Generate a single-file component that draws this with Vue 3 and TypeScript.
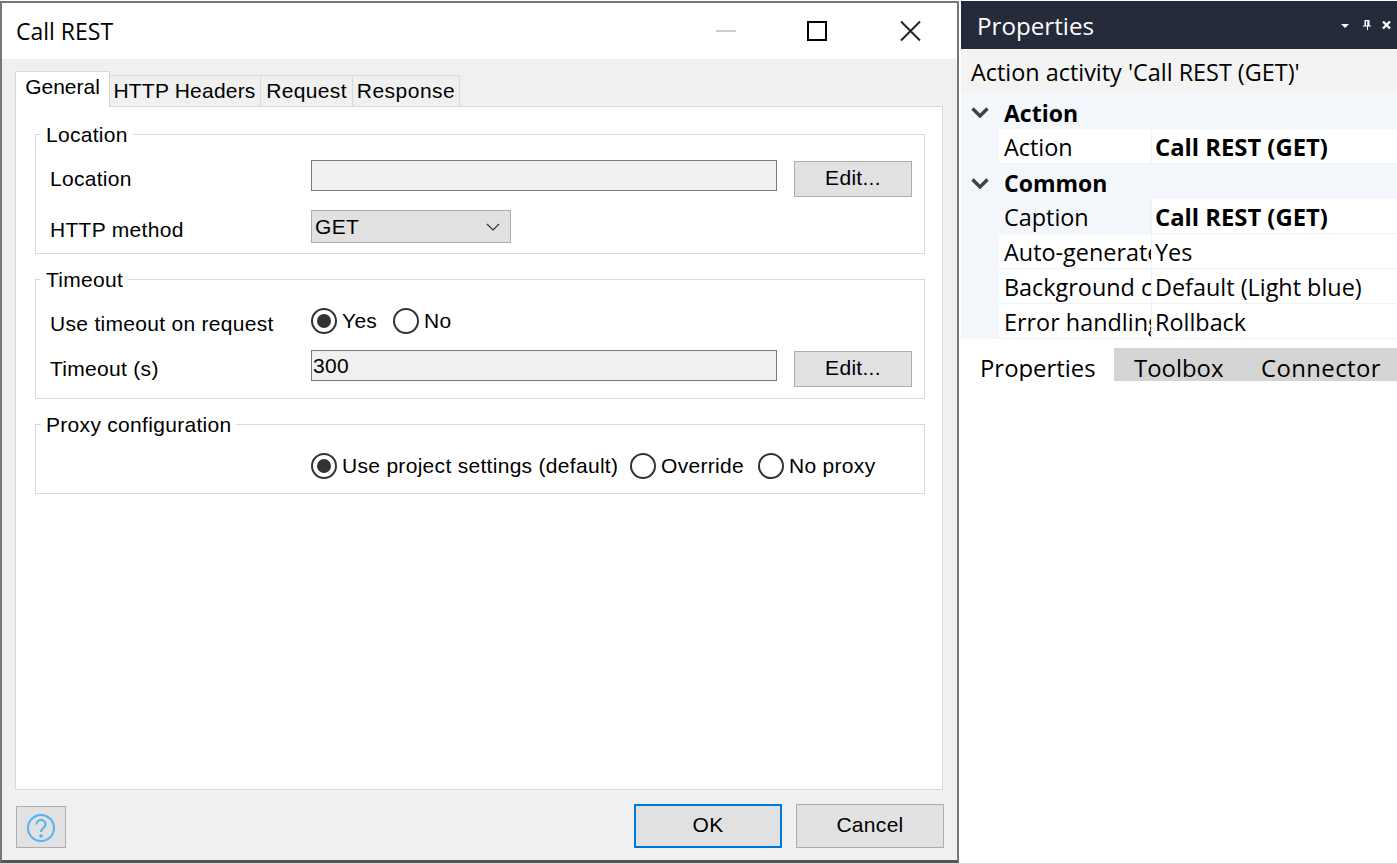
<script setup lang="ts">
const tabs = ['HTTP Headers', 'Request', 'Response']
const tabWidths: Record<string, string> = { 'HTTP Headers': 'w-headers', Request: 'w-request', Response: 'w-response' }
interface Row { name: string; value: string; bold?: boolean; tinted?: boolean }
const groups: { title: string; short?: boolean; rows: Row[] }[] = [
  { title: 'Action', rows: [{ name: 'Action', value: 'Call REST (GET)', bold: true }] },
  {
    title: 'Common',
    short: true,
    rows: [
      { name: 'Caption', value: 'Call REST (GET)', bold: true, tinted: true },
      { name: 'Auto-generate caption', value: 'Yes' },
      { name: 'Background color', value: 'Default (Light blue)' },
      { name: 'Error handling', value: 'Rollback' },
    ],
  },
]
</script>

<template>
  <div class="screen">
    <section class="dialog">
      <header class="titlebar">
        <span class="title">Call REST</span>
        <svg class="winctl" width="240" height="24" viewBox="0 0 240 24">
          <rect x="0" y="11" width="20" height="2" fill="#cccccc" />
          <rect x="92" y="3" width="18" height="18" fill="none" stroke="#000" stroke-width="2" />
          <path d="M185 2.5 L204 21.5 M204 2.5 L185 21.5" stroke="#222" stroke-width="2" fill="none" />
        </svg>
      </header>
      <div class="body">
        <div class="tabstrip">
          <div class="tab active">General</div>
          <div v-for="t in tabs" :key="t" class="tab" :class="tabWidths[t]">{{ t }}</div>
        </div>
        <div class="panel">
          <fieldset class="group g-location">
            <legend>Location</legend>
            <div class="row r-first">
              <span class="label">Location</span>
              <div class="field"></div>
              <button class="btn edit">Edit...</button>
            </div>
            <div class="row r-combo">
              <span class="label low">HTTP method</span>
              <div class="combo">
                <span>GET</span>
                <svg width="14" height="8" viewBox="0 0 14 8"><path d="M1 1 L7 7 L13 1" fill="none" stroke="#333" stroke-width="1.2" /></svg>
              </div>
            </div>
          </fieldset>

          <fieldset class="group g-timeout">
            <legend>Timeout</legend>
            <div class="row r-radio">
              <span class="label low">Use timeout on request</span>
              <span class="radio on"></span><span class="rtext w-yes">Yes</span>
              <span class="radio"></span><span class="rtext">No</span>
            </div>
            <div class="row r-first r-timeout">
              <span class="label">Timeout (s)</span>
              <div class="field"><span>300</span></div>
              <button class="btn edit">Edit...</button>
            </div>
          </fieldset>

          <fieldset class="group g-proxy">
            <legend>Proxy configuration</legend>
            <div class="row r-radio">
              <span class="label"></span>
              <span class="radio on"></span><span class="rtext w-project">Use project settings (default)</span>
              <span class="radio"></span><span class="rtext w-override">Override</span>
              <span class="radio"></span><span class="rtext">No proxy</span>
            </div>
          </fieldset>
        </div>
        <footer class="footer">
          <button class="btn help" aria-label="Help">
            <svg width="30" height="30" viewBox="0 0 30 30">
              <circle cx="15" cy="15" r="13" fill="none" stroke="#4fb3f6" stroke-width="2" />
              <path d="M10.5 11.5 C10.5 5.5 19.5 5.5 19.5 11.5 C19.5 15 15 15 15 19" fill="none" stroke="#4fb3f6" stroke-width="2" />
              <circle cx="15" cy="23" r="1.8" fill="#4fb3f6" />
            </svg>
          </button>
          <button class="btn big primary">OK</button>
          <button class="btn big">Cancel</button>
        </footer>
      </div>
    </section>

    <aside class="props">
      <header class="props-head">
        <span class="props-title">Properties</span>
        <svg class="props-icons" width="52" height="12" viewBox="0 0 52 12">
          <path d="M0 5 H8 L4 9 Z" fill="#fff" />
          <path d="M23.5 1 H28.5 V6.5 H30 V7.5 H27 V11 H26 V7.5 H22 V6.5 H23.5 Z M25 2 V6.5 H26.2 V2 Z" fill="#fff" fill-rule="evenodd" />
          <path d="M42 2.5 L49 9.5 M49 2.5 L42 9.5" stroke="#fff" stroke-width="2.4" />
        </svg>
      </header>
      <div class="props-sub">Action activity 'Call REST (GET)'</div>
      <div class="grid">
        <template v-for="g in groups" :key="g.title">
          <div class="ghead" :class="{ short: g.short }">
            <svg width="18" height="11" viewBox="0 0 18 11"><path d="M1.5 1.5 L9 9 L16.5 1.5" fill="none" stroke="#444" stroke-width="3.4" /></svg>
            <span>{{ g.title }}</span>
          </div>
          <div v-for="r in g.rows" :key="r.name" class="prow">
            <div class="pname" :class="{ tinted: r.tinted }">{{ r.name }}</div>
            <div class="pvalue" :class="{ bold: r.bold }">{{ r.value }}</div>
          </div>
        </template>
      </div>
      <nav class="ptabs">
        <div class="ptab on">Properties</div>
        <div class="ptab toolbox">Toolbox</div>
        <div class="ptab connector">Connector</div>
      </nav>
    </aside>
  </div>
</template>

<style>
html, body { margin: 0; background: #fff; }
</style>

<style scoped>
* { box-sizing: border-box; }
.screen {
  width: 1397px;
  height: 864px;
  display: flex;
  background: #fff;
  overflow: hidden;
  color: #000;
  border-bottom: 1px solid #dddddd;
}
.dialog {
  width: 959px;
  height: 862px;
  margin-top: 1px;
  border: 2px solid #777;
  border-bottom: 3px solid #555;
  display: flex;
  flex-direction: column;
  font-family: "Liberation Sans", Arial, sans-serif;
  font-size: 21px;
  letter-spacing: 0.3px;
}
.titlebar {
  height: 56px;
  flex: none;
  background: #fff;
  display: flex;
  align-items: center;
  padding-left: 14px;
  position: relative;
}
.title {
  font-family: "Open Sans", sans-serif;
  font-size: 23px;
  letter-spacing: 0;
}
.winctl { margin-left: auto; margin-right: 1px; }
.body {
  flex: 1;
  min-height: 0;
  background: #f0f0f0;
  padding: 12px 14px 0 13px;
  display: flex;
  flex-direction: column;
}
.tabstrip { display: flex; align-items: flex-end; height: 36px; flex: none; position: relative; z-index: 1; margin-bottom: -1px; }
.tab {
  height: 32px;
  line-height: 30px;
  border: 1px solid #d9d9d9;
  border-left: 0;
  text-align: center;
  white-space: nowrap;
  background: #f0f0f0;
}
.tab.active {
  width: 95px;
  height: 36px;
  line-height: 29px;
  border: 1px solid #d9d9d9;
  border-bottom: 0;
  background: #fff;
  letter-spacing: 0;
}
.w-headers { width: 151px; letter-spacing: 0.2px; padding-right: 1px; }
.w-request { width: 92px; letter-spacing: 0.35px; }
.w-response { width: 107px; letter-spacing: 0.5px; }
.panel {
  height: 684px;
  flex: none;
  background: #fff;
  border: 1px solid #d9d9d9;
  padding: 15px 17px 0 19px;
  display: flex;
  flex-direction: column;
  gap: 13px;
}
.group {
  margin: 0;
  padding: 0 0 0 14px;
  min-width: 0;
  border: 1px solid #d9d9d9;
  flex: none;
}
.group legend {
  margin-left: -9px;
  padding: 0 5px;
  height: 24px;
  line-height: 25px;
}
.g-location, .g-timeout { height: 132px; }
.g-proxy { height: 82px; }
.row { display: flex; align-items: center; }
.label { width: 261px; flex: none; white-space: nowrap; }
.low { padding-top: 6px; }
.r-first { height: 38px; align-items: flex-start; margin-top: 14px; }
.r-first .label { line-height: 38px; }
.r-timeout { margin-top: 16px; }
.r-combo { height: 33px; margin-top: 12px; }
.r-radio { height: 26px; margin-top: 17px; }
.field {
  width: 466px;
  height: 31px;
  flex: none;
  background: #f0f0f0;
  border: 1px solid #7a7a7a;
  padding-left: 1px;
  line-height: 30px;
}
.btn {
  font: inherit;
  letter-spacing: inherit;
  color: #000;
  background: #e1e1e1;
  border: 1px solid #adadad;
  border-radius: 0;
  padding: 0;
  margin: 0;
}
.edit { width: 118px; height: 36px; margin: 1px 0 0 17px; padding-bottom: 2px; }
.combo {
  width: 200px;
  height: 33px;
  background: #e1e1e1;
  border: 1px solid #adadad;
  display: flex;
  align-items: center;
  justify-content: space-between;
  padding: 0 10px 0 3px;
}
.combo span { padding-top: 1px; }
.radio {
  width: 26px;
  height: 26px;
  flex: none;
  border: 2px solid #333;
  border-radius: 50%;
  background: #fff;
  position: relative;
}
.radio.on::after {
  content: "";
  position: absolute;
  inset: 4px;
  border-radius: 50%;
  background: #333;
}
.rtext { margin-left: 5px; white-space: nowrap; }
.w-yes { width: 51px; }
.w-project { width: 288px; }
.w-override { width: 97px; }
.footer {
  flex: 1;
  display: flex;
  align-items: flex-start;
  padding-top: 14px;
  margin-right: -1px;
}
.help {
  width: 50px;
  height: 42px;
  margin: 2px auto 0 1px;
  padding-top: 2px;
  display: flex;
  align-items: center;
  justify-content: center;
}
.big { width: 148px; height: 44px; padding-bottom: 2px; }
.big + .big { margin-left: 14px; }
.primary { border: 2px solid #0078d7; }

.props {
  width: 436px;
  margin-left: 2px;
  margin-top: 1px;
  display: flex;
  flex-direction: column;
  font-family: "Open Sans", sans-serif;
  font-size: 23.4px;
}
.props-head {
  height: 48px;
  flex: none;
  background: #252b3b;
  color: #fff;
  display: flex;
  align-items: center;
  padding-left: 16px;
}
.props-title { font-size: 24.2px; }
.props-icons { margin-left: auto; margin-right: 4px; }
.props-sub {
  height: 43px;
  flex: none;
  background: #f3f3f3;
  padding-left: 10px;
  line-height: 46px;
  white-space: nowrap;
}
.grid {
  background: #f3f6fb;
  padding: 1px 0 0 1px;
  flex: none;
}
.ghead {
  height: 36px;
  display: flex;
  align-items: center;
  font-weight: 700;
  font-size: 23px;
}
.ghead.short { height: 35px; }
.ghead svg { margin: 3px 0 0 9px; flex: none; }
.ghead span { margin: 3px 0 0 15px; }
.prow {
  height: 35px;
  margin-left: 37px;
  display: flex;
  background: #fff;
  border-bottom: 1px solid #eef1f6;
  line-height: 37px;
}
.pname {
  width: 153px;
  flex: none;
  padding-left: 5px;
  overflow: hidden;
  white-space: nowrap;
  border-right: 1px solid #eef1f6;
}
.pname.tinted { background: #f3f6fb; }
.pvalue { flex: 1; padding-left: 3px; white-space: nowrap; overflow: hidden; }
.bold { font-weight: 700; font-size: 23.8px; }
.ptabs {
  height: 33px;
  margin-top: 9px;
  flex: none;
  display: flex;
  background: #d4d4d4;
  overflow: hidden;
}
.ptab { line-height: 40px; white-space: nowrap; font-size: 23.9px; }
.ptab.on { width: 153px; background: #fff; padding-left: 19px; }
.toolbox { width: 147px; padding-left: 20px; }
.connector { flex: 1; letter-spacing: 0.4px; }
</style>
